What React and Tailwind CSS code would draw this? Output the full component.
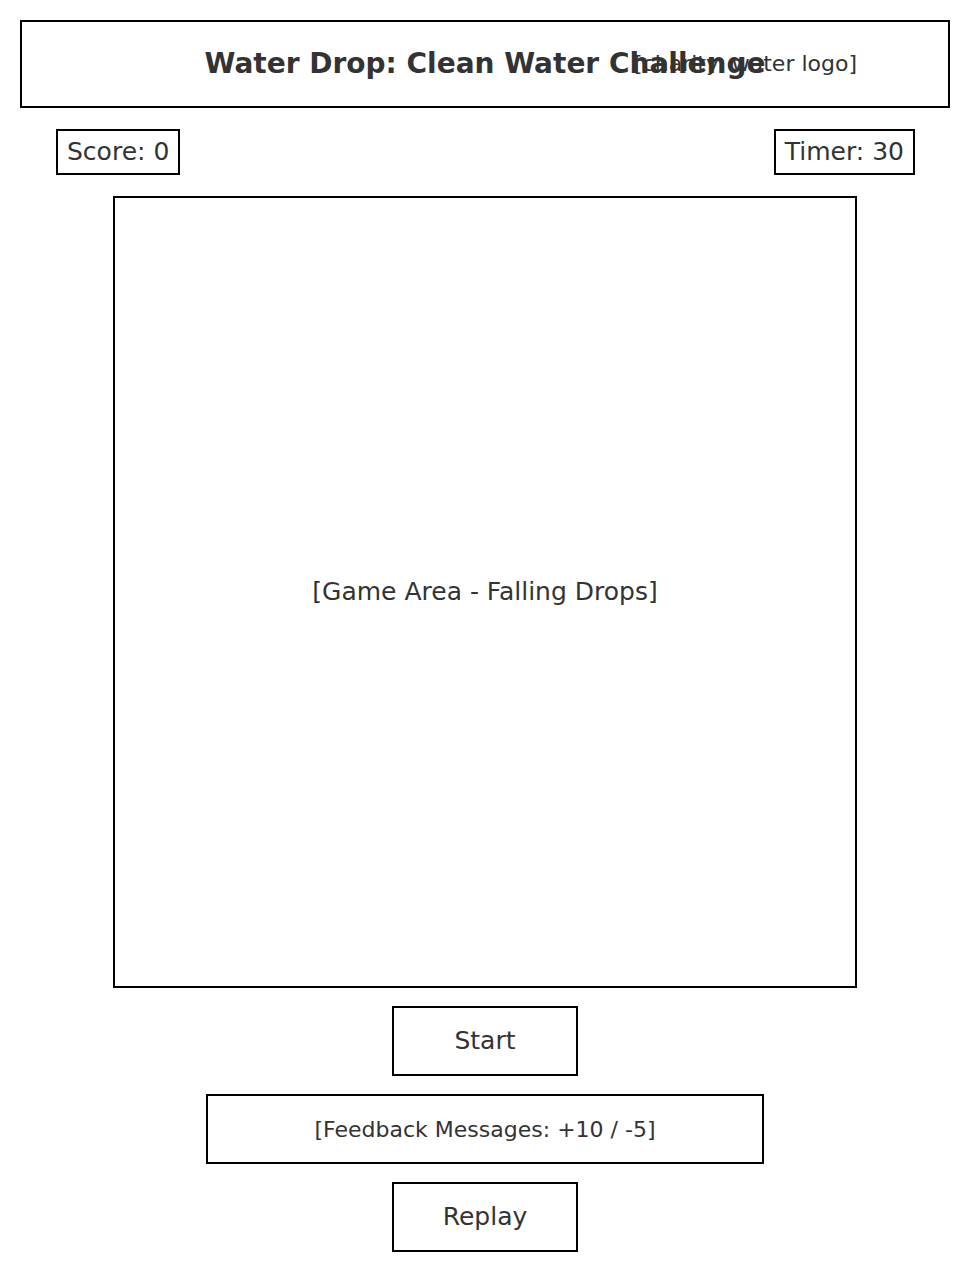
const App = () => {
  return (
    <div className="min-h-screen bg-white p-5 text-[#333]" style={{ fontFamily: '"DejaVu Sans", sans-serif' }}>
      <div className="w-[930px]">
        {/* Header */}
        <div className="relative flex h-[88px] items-center justify-center border-[2px] border-solid border-black">
          <h1 className="text-[28px] font-bold leading-none">Water Drop: Clean Water Challenge</h1>
          <span className="absolute right-[91px] top-1/2 -translate-y-1/2 text-[22px] leading-none">
            [charity: water logo]
          </span>
        </div>

        {/* Score / Timer */}
        <div className="mt-[21px] flex items-center justify-between pl-[36px] pr-[35px]">
          <div className="flex h-[46px] items-center border-[2px] border-solid border-black px-[9px] text-[25px]">Score: 0</div>
          <div className="flex h-[46px] items-center border-[2px] border-solid border-black px-[9px] text-[25px]">Timer: 30</div>
        </div>

        {/* Game area */}
        <div className="mx-auto mt-[21px] flex h-[792px] w-[744px] items-center justify-center border-[2px] border-solid border-black text-[25px]">
          [Game Area - Falling Drops]
        </div>

        {/* Controls */}
        <div className="mt-[18px] flex flex-col items-center gap-[18px]">
          <button className="flex h-[70px] w-[186px] items-center justify-center border-[2px] border-solid border-black text-[25px]">
            Start
          </button>
          <div className="flex h-[70px] w-[558px] items-center justify-center border-[2px] border-solid border-black text-[22px]">
            [Feedback Messages: +10 / -5]
          </div>
          <button className="flex h-[70px] w-[186px] items-center justify-center border-[2px] border-solid border-black text-[25px]">
            Replay
          </button>
        </div>
      </div>
    </div>
  );
};

export default App;
